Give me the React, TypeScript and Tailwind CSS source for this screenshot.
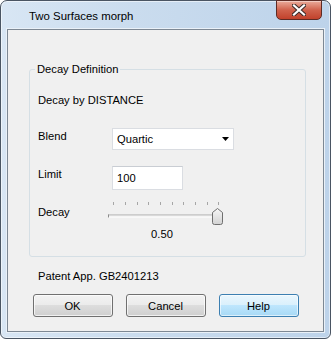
import React from "react";

const font = { fontFamily: '"Liberation Sans", Arial, sans-serif' };

function CloseButton() {
  return (
    <div className="mr-[8px] -mt-[1px] self-start w-[46px] h-[20px] rounded-b-[5px] border border-[#5d2b24] bg-gradient-to-b from-[#e9ab9b] via-[#d0624c] to-[#c1412b] shadow-[inset_0_1px_0_rgba(255,255,255,0.4)] flex items-center justify-center">
      <svg width="14" height="12" viewBox="0 0 14 12">
        <path d="M2 1.5 L12 10.5 M12 1.5 L2 10.5" stroke="#3b2a28" strokeWidth="4.2" strokeLinecap="square" />
        <path d="M2 1.5 L12 10.5 M12 1.5 L2 10.5" stroke="#ffffff" strokeWidth="2.2" strokeLinecap="square" />
      </svg>
    </div>
  );
}

function Slider() {
  const ticks = [5, 17, 29, 40, 52, 64, 75, 87, 99, 110];
  return (
    <svg width="118" height="26" viewBox="0 0 118 26" className="block">
      <defs>
        <linearGradient id="thumb" x1="0" y1="0" x2="0" y2="1">
          <stop offset="0" stopColor="#f7f7f7" />
          <stop offset="1" stopColor="#d2d2d2" />
        </linearGradient>
      </defs>
      {ticks.map((x) => (
        <rect key={x} x={x} y={2} width={1} height={3} fill="#a6a6a6" />
      ))}
      <rect x={0} y={14.5} width={112} height={1} fill="#a9a9a9" />
      <rect x={0} y={15.5} width={112} height={1} fill="#e4e4e4" />
      <rect x={0} y={16.5} width={112} height={1} fill="#ffffff" />
      <rect x={0} y={14.5} width={1} height={3} fill="#8c8c8c" />
      <path
        d="M109.5 8.5 L114.5 12.5 L114.5 22.5 Q114.5 24.5 112.5 24.5 L106.5 24.5 Q104.5 24.5 104.5 22.5 L104.5 12.5 Z"
        fill="url(#thumb)"
        stroke="#6f6f6f"
        strokeWidth="1"
      />
    </svg>
  );
}

function Button({ label, focused }: { label: string; focused?: boolean }) {
  return (
    <div
      className={
        "w-[80px] h-[23px] rounded-[3px] border flex items-center justify-center text-black " +
        (focused
          ? "border-[#3c7fb1] bg-[linear-gradient(#eaf6fd_0%,#d9f0fc_50%,#bee6fd_50%,#a7d9f5_100%)] shadow-[inset_0_0_0_1px_rgba(255,255,255,0.6)]"
          : "border-[#707070] bg-[linear-gradient(#f2f2f2_0%,#ebebeb_50%,#dddddd_50%,#cfcfcf_100%)] shadow-[inset_0_0_0_1px_rgba(255,255,255,0.7)]")
      }
    >
      {label}
    </div>
  );
}

export default function App() {
  return (
    <div style={font} className="text-[11.2px] leading-[16px] text-black">
      <div className="w-[331px] h-[339px] flex flex-col rounded-t-[7px] rounded-b-[6px] border border-[#4a5563] bg-[linear-gradient(90deg,#d8e6f4_0%,#cadcee_40%,#bdd3ea_100%)] shadow-[inset_0_0_0_1px_rgba(255,255,255,0.55)]">
        <div className="h-[28px] flex items-start">
          <div className="flex-1 pl-[28px] pt-[7px] text-[11.4px]">Two Surfaces morph</div>
          <CloseButton />
        </div>
        <div className="mx-[6px] mb-[6px] flex-1 border border-[#7d8894] outline outline-1 outline-[#eaf1f8] bg-[#f0f0f0] flex flex-col">
          <fieldset className="ml-[21px] mt-[31px] w-[277px] border border-[#d5dfe5] rounded-[3px] pl-[8px] pb-[14px]">
            <legend className="-ml-[3px] px-[2px]">Decay Definition</legend>
            <div className="mt-[15px]">Decay by DISTANCE</div>
            <div className="mt-[20px] flex h-[22px]">
              <div className="w-[74px]">Blend</div>
              <div className="w-[122px] h-[22px] bg-white border border-[#dadde2] flex items-center justify-between pl-[4px] pr-[4px]">
                <span>Quartic</span>
                <svg width="7" height="4" viewBox="0 0 7 4">
                  <polygon points="0,0 7,0 3.5,4" fill="#000" />
                </svg>
              </div>
            </div>
            <div className="mt-[16px] flex h-[24px]">
              <div className="w-[74px]">Limit</div>
              <div className="w-[71px] h-[24px] bg-white border border-[#dadde2] border-t-[#c9cdd3] flex items-center pl-[4px]">
                100
              </div>
            </div>
            <div className="mt-[10px] flex h-[26px]">
              <div className="w-[70px] mt-[4px]">Decay</div>
              <Slider />
            </div>
            <div className="ml-[70px] w-[108px] text-center">0.50</div>
          </fieldset>
          <div className="ml-[30px] mt-[11px]">Patent App. GB2401213</div>
          <div className="mt-[10px] flex justify-center gap-[13px]">
            <Button label="OK" />
            <Button label="Cancel" />
            <Button label="Help" focused />
          </div>
        </div>
      </div>
    </div>
  );
}
